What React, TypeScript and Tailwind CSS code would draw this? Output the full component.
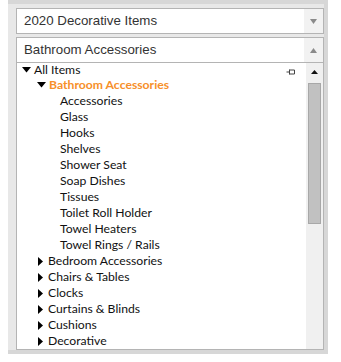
import React from "react";

const Down = () => (
  <svg width="9" height="6" viewBox="0 0 9 6">
    <polygon points="0,0 9,0 4.5,5.5" fill="#000" />
  </svg>
);
const Right = () => (
  <svg width="5" height="9" viewBox="0 0 5 9">
    <polygon points="0,0 5,4.5 0,9" fill="#000" />
  </svg>
);

const children = [
  "Accessories",
  "Glass",
  "Hooks",
  "Shelves",
  "Shower Seat",
  "Soap Dishes",
  "Tissues",
  "Toilet Roll Holder",
  "Towel Heaters",
  "Towel Rings / Rails",
];
const others = [
  "Bedroom Accessories",
  "Chairs & Tables",
  "Clocks",
  "Curtains & Blinds",
  "Cushions",
  "Decorative",
];

export default function App() {
  const tree = { fontFamily: "Lato, 'Open Sans', sans-serif" };
  const head = { fontFamily: "'Liberation Sans', Arial, sans-serif" };
  return (
    <div className="ml-2 w-[320px] h-[354px] bg-[#d7d7d7] pt-1 pr-1 pb-1">
      <div className="h-full bg-[#e8e8e8] pl-2 pt-1 flex flex-col">
        <div className="h-[26px] border border-[#b4b4b4] bg-white flex items-stretch" style={head}>
          <div className="flex-1 pl-[7px] text-[13.3px] leading-[24px] text-[#333]">2020 Decorative Items</div>
          <div className="w-[19px] bg-[#f2f2f2] flex items-center justify-center">
            <svg width="7" height="5" viewBox="0 0 7 5"><polygon points="0,0 7,0 3.5,5" fill="#8a8a8a" /></svg>
          </div>
        </div>
        <div className="h-[3px]" />
        <div className="flex-1 flex flex-col border border-[#b4b4b4] bg-white min-h-0 overflow-hidden">
          <div className="h-[25px] border-b border-[#b4b4b4] flex items-stretch shrink-0" style={head}>
            <div className="flex-1 pl-[7px] text-[13.3px] leading-[24px] text-[#333]">Bathroom Accessories</div>
            <div className="w-[19px] bg-[#f2f2f2] flex items-center justify-center">
              <svg width="7" height="5" viewBox="0 0 7 5"><polygon points="0,5 7,5 3.5,0" fill="#8a8a8a" /></svg>
            </div>
          </div>
          <div className="flex-1 flex min-h-0">
            <div className="flex-1 relative overflow-hidden" style={tree}>
              <svg className="absolute left-[269px] top-[6px]" width="9" height="6" viewBox="0 0 9 6">
                <path d="M0.5 3H3.5M3.5 0.5V5.5M3.5 1H8.5V5H3.5" stroke="#444" strokeWidth="1" fill="none" />
              </svg>
              <div className="text-[12.2px] leading-[16px] text-[#111]">
                <div className="flex items-center h-[14px] pl-[5px] gap-[3px]">
                  <Down />
                  <span className="leading-[14px]">All Items</span>
                </div>
                <div className="flex items-center pl-[20px] gap-[3px]">
                  <Down />
                  <span className="text-[#f7902a] font-bold">Bathroom Accessories</span>
                </div>
                {children.map((c) => (
                  <div key={c} className="pl-[43px]">{c}</div>
                ))}
                {others.map((c) => (
                  <div key={c} className="flex items-center pl-[21px] gap-[5px]">
                    <Right />
                    <span>{c}</span>
                  </div>
                ))}
              </div>
            </div>
            <div className="w-[17px] bg-[#f0f0f0] flex flex-col items-center">
              <div className="h-[17px] flex items-center justify-center">
                <svg width="7" height="4" viewBox="0 0 7 4"><polygon points="0,4 7,4 3.5,0" fill="#111" /></svg>
              </div>
              <div className="mt-[3px] w-[13px] h-[141px] bg-[#c1c1c1] border border-[#a8a8a8]" />
            </div>
          </div>
        </div>
      </div>
    </div>
  );
}
